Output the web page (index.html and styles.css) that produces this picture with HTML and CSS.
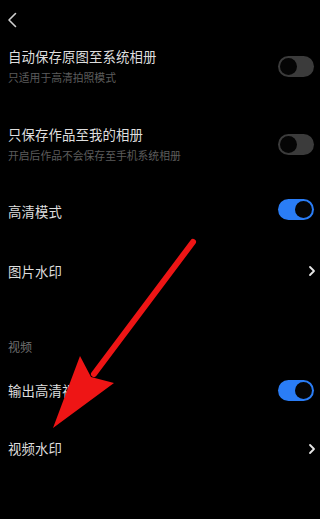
FILE: index.html
```html
<!DOCTYPE html>
<html lang="zh-CN">
<head>
<meta charset="utf-8">
<title>设置</title>
<link rel="stylesheet" href="styles.css">
</head>
<body>
<div class="page">
  <div class="topbar">
    <svg class="back" width="10" height="16" viewBox="0 0 10 16"><path d="M8.5 1.5 L2 8 L8.5 14.5" fill="none" stroke="#cfcfcf" stroke-width="1.6" stroke-linecap="round" stroke-linejoin="round"/></svg>
  </div>

  <div class="row r1">
    <div class="texts">
      <div class="title">自动保存原图至系统相册</div>
      <div class="sub">只适用于高清拍照模式</div>
    </div>
    <span class="switch off"><span class="knob"></span></span>
  </div>

  <div class="row r2">
    <div class="texts">
      <div class="title">只保存作品至我的相册</div>
      <div class="sub">开启后作品不会保存至手机系统相册</div>
    </div>
    <span class="switch off"><span class="knob"></span></span>
  </div>

  <div class="row r3">
    <div class="title">高清模式</div>
    <span class="switch on"><span class="knob"></span></span>
  </div>

  <div class="row r4">
    <div class="title">图片水印</div>
    <svg class="chev" width="8" height="12" viewBox="0 0 8 12"><path d="M2 2 L6 6 L2 10" fill="none" stroke="#e6e6e6" stroke-width="1.8" stroke-linecap="round" stroke-linejoin="round"/></svg>
  </div>

  <div class="section s1">视频</div>

  <div class="row r5">
    <div class="title">输出高清视频</div>
    <span class="switch on"><span class="knob"></span></span>
  </div>

  <div class="row r6">
    <div class="title">视频水印</div>
    <svg class="chev" width="8" height="12" viewBox="0 0 8 12"><path d="M2 2 L6 6 L2 10" fill="none" stroke="#e6e6e6" stroke-width="1.8" stroke-linecap="round" stroke-linejoin="round"/></svg>
  </div>

  <div class="section s2">其他</div>

  <svg class="arrow" width="320" height="519" viewBox="0 0 320 519">
    <line x1="193" y1="242" x2="94" y2="374" stroke="#ee1515" stroke-width="6" stroke-linecap="round"/>
    <polygon points="53,428 80,356 91,377 114,383" fill="#ee1515"/>
  </svg>
</div>
</body>
</html>
```

FILE: styles.css
```css
* { box-sizing: border-box; }
html, body { margin: 0; padding: 0; background: #000; }
body {
  font-family: "Noto Sans CJK SC", "Noto Sans", sans-serif;
  color: #dcdcdc;
  width: 320px;
  height: 519px;
  overflow: hidden;
}
.page { position: relative; width: 320px; height: 519px; }
.topbar {
  height: 36px;
  display: flex;
  align-items: center;
  padding-left: 7px;
  padding-top: 3px;
}
.row {
  display: flex;
  align-items: center;
  justify-content: space-between;
  padding: 0 6px 0 8px;
}
.texts { display: flex; flex-direction: column; gap: 5px; }
.title {
  font-size: 13.4px;
  line-height: 17px;
  color: #dedede;
  letter-spacing: 0.1px;
}
.sub {
  font-size: 10.8px;
  line-height: 14px;
  color: #5c5c5c;
}
.r1 { height: 60px; }
.r2 { height: 60px; margin-top: 18px; }
.r3 { height: 60px; margin-top: 7px; }
.r4 { height: 60px; padding-right: 4px; }
.r5 { height: 58px; }
.r6 { height: 59px; padding-right: 4px; }
.section {
  height: 30px;
  display: flex;
  align-items: center;
  padding-left: 8px;
  font-size: 12px;
  color: #707070;
}
.s1 { margin-top: 30px; }
.s2 { margin-top: 31px; }
.switch {
  width: 36px;
  height: 21px;
  border-radius: 11px;
  display: flex;
  align-items: center;
  padding: 0 2px;
}
.switch .knob {
  width: 17px;
  height: 17px;
  border-radius: 50%;
  background: #050505;
}
.switch.off { background: #3b3b3b; justify-content: flex-start; }
.switch.on { background: #2a7df6; justify-content: flex-end; }
.r3 .switch { margin-top: -4px; }
.chev { display: block; }
.arrow { position: absolute; left: 0; top: 0; pointer-events: none; }
```
